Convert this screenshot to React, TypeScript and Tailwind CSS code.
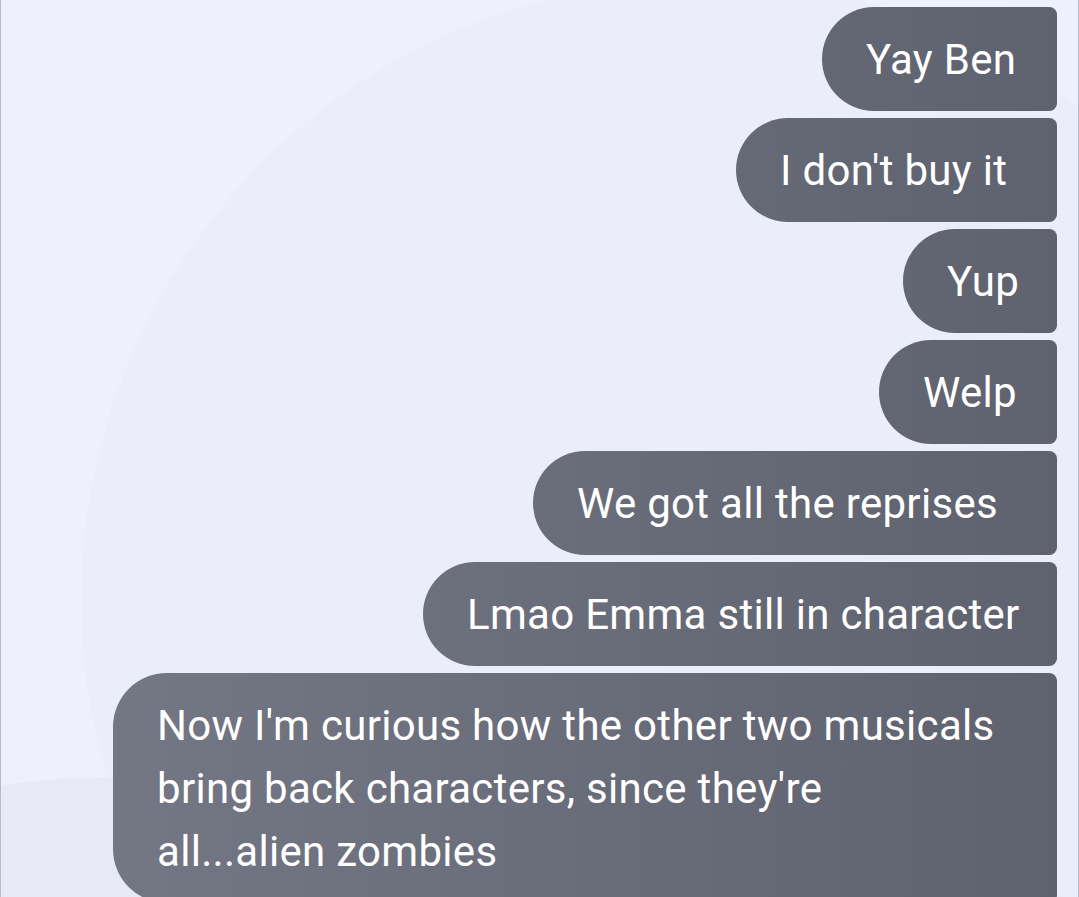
import React from "react";

const msgs: { lines: string[]; w: string }[] = [
  { lines: ["Yay Ben"], w: "w-[235px]" },
  { lines: ["I don't buy it"], w: "w-[321px]" },
  { lines: ["Yup"], w: "w-[154px]" },
  { lines: ["Welp"], w: "w-[178px]" },
  { lines: ["We got all the reprises"], w: "w-[524px]" },
  { lines: ["Lmao Emma still in character"], w: "w-[634px]" },
  {
    lines: [
      "Now I'm curious how the other two musicals",
      "bring back characters, since they're",
      "all...alien zombies",
    ],
    w: "w-[944px]",
  },
];

export default function App() {
  return (
    <div
      className="relative w-[1079px] h-[897px] overflow-hidden bg-[#eef0fd] border-l border-r border-[#b9bccb]"
      style={{ fontFamily: "Roboto, 'Noto Sans', sans-serif" }}
    >
      <div className="absolute left-[80px] top-[-20px] w-[1240px] h-[1240px] rounded-full bg-[#ebedfa]" />
      <div className="absolute left-[-600px] top-[778px] w-[1400px] h-[1400px] rounded-full bg-[#e7e9f6]" />
      <div className="relative flex flex-col items-end gap-[7px] pt-[7px] pr-[21px]">
        {msgs.map((m, i) => (
          <div
            key={i}
            className={`${m.w} rounded-l-[54px] rounded-r-[8px] bg-[linear-gradient(to_right,#767986,#5e616e)] bg-fixed pl-[44px] pt-[21px] pb-[20px] text-white text-[42px] font-normal tracking-[0.3px] leading-[63px] whitespace-nowrap`}
          >
            {m.lines.map((l, j) => (
              <div key={j}>{l}</div>
            ))}
          </div>
        ))}
      </div>
    </div>
  );
}
